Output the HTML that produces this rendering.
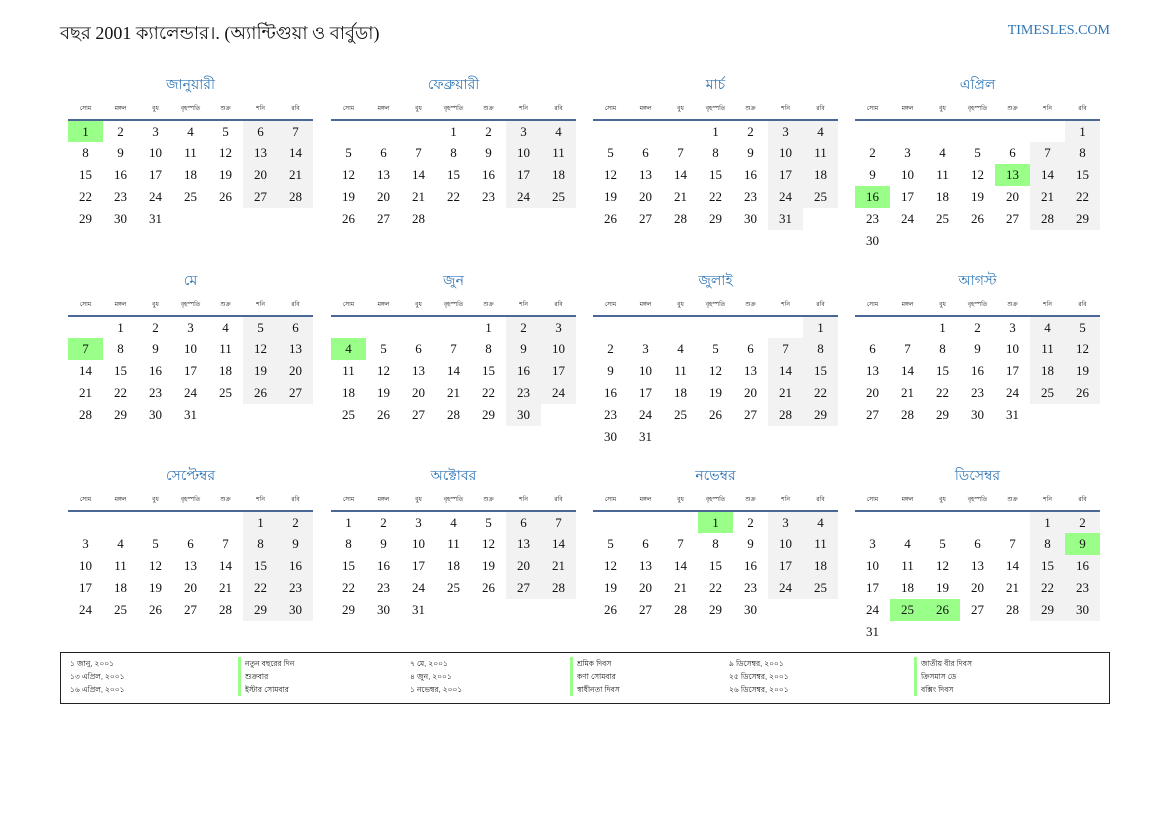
<!DOCTYPE html>
<html><head><meta charset="utf-8"><style>
*{margin:0;padding:0;box-sizing:border-box}
body{width:1169px;height:827px;background:#fff;position:relative;font-family:"Liberation Serif","Noto Serif CJK SC",serif;color:#111;overflow:hidden}
.hd{position:absolute;left:60px;top:19px;font-size:18px}
.site{position:absolute;right:59px;top:23px;font-size:14px;color:#2e75b6}
.m{position:absolute;width:245px}
.t{height:20px;line-height:20px;text-align:center;color:#2e75b6;font-size:14px;font-family:"Liberation Sans",sans-serif}
table{border-collapse:collapse;table-layout:fixed;width:245px}
th{font-size:6px;font-weight:normal;font-family:"Liberation Sans",sans-serif;border-bottom:2px solid #4a6797}
td{width:35px;height:22px;text-align:center;font-size:13px;padding:0}
td.w{background:#f2f2f2}
td.h{background:#99ff88}
.hr th{height:26px;padding-top:3px;vertical-align:middle}
.lg{position:absolute;left:60px;top:652px;width:1050px;height:52px;border:1.5px solid #222;font-size:7.5px;font-family:"Liberation Sans",sans-serif}
.lg div{position:absolute;line-height:13px;height:13px}
.lg .n{border-left:3px solid #99ff88;padding-left:4px}
</style></head><body>
<div class="hd">বছর 2001 ক্যালেন্ডার।. (অ্যান্টিগুয়া ও বার্বুডা)</div>
<div class="site">TIMESLES.COM</div>

<div class="m" style="left:68px;top:74px"><div class="t">জানুয়ারী</div><table><tr class="hr"><th>সোম</th><th>মঙ্গল</th><th>বুধ</th><th>বৃহস্পতি</th><th>শুক্র</th><th>শনি</th><th>রবি</th></tr>
<tr><td class="h">1</td><td>2</td><td>3</td><td>4</td><td>5</td><td class="w">6</td><td class="w">7</td></tr>
<tr><td>8</td><td>9</td><td>10</td><td>11</td><td>12</td><td class="w">13</td><td class="w">14</td></tr>
<tr><td>15</td><td>16</td><td>17</td><td>18</td><td>19</td><td class="w">20</td><td class="w">21</td></tr>
<tr><td>22</td><td>23</td><td>24</td><td>25</td><td>26</td><td class="w">27</td><td class="w">28</td></tr>
<tr><td>29</td><td>30</td><td>31</td><td></td><td></td><td></td><td></td></tr></table></div>

<div class="m" style="left:331px;top:74px"><div class="t">ফেব্রুয়ারী</div><table><tr class="hr"><th>সোম</th><th>মঙ্গল</th><th>বুধ</th><th>বৃহস্পতি</th><th>শুক্র</th><th>শনি</th><th>রবি</th></tr>
<tr><td></td><td></td><td></td><td>1</td><td>2</td><td class="w">3</td><td class="w">4</td></tr>
<tr><td>5</td><td>6</td><td>7</td><td>8</td><td>9</td><td class="w">10</td><td class="w">11</td></tr>
<tr><td>12</td><td>13</td><td>14</td><td>15</td><td>16</td><td class="w">17</td><td class="w">18</td></tr>
<tr><td>19</td><td>20</td><td>21</td><td>22</td><td>23</td><td class="w">24</td><td class="w">25</td></tr>
<tr><td>26</td><td>27</td><td>28</td><td></td><td></td><td></td><td></td></tr></table></div>

<div class="m" style="left:593px;top:74px"><div class="t">মার্চ</div><table><tr class="hr"><th>সোম</th><th>মঙ্গল</th><th>বুধ</th><th>বৃহস্পতি</th><th>শুক্র</th><th>শনি</th><th>রবি</th></tr>
<tr><td></td><td></td><td></td><td>1</td><td>2</td><td class="w">3</td><td class="w">4</td></tr>
<tr><td>5</td><td>6</td><td>7</td><td>8</td><td>9</td><td class="w">10</td><td class="w">11</td></tr>
<tr><td>12</td><td>13</td><td>14</td><td>15</td><td>16</td><td class="w">17</td><td class="w">18</td></tr>
<tr><td>19</td><td>20</td><td>21</td><td>22</td><td>23</td><td class="w">24</td><td class="w">25</td></tr>
<tr><td>26</td><td>27</td><td>28</td><td>29</td><td>30</td><td class="w">31</td><td></td></tr></table></div>

<div class="m" style="left:855px;top:74px"><div class="t">এপ্রিল</div><table><tr class="hr"><th>সোম</th><th>মঙ্গল</th><th>বুধ</th><th>বৃহস্পতি</th><th>শুক্র</th><th>শনি</th><th>রবি</th></tr>
<tr><td></td><td></td><td></td><td></td><td></td><td></td><td class="w">1</td></tr>
<tr><td>2</td><td>3</td><td>4</td><td>5</td><td>6</td><td class="w">7</td><td class="w">8</td></tr>
<tr><td>9</td><td>10</td><td>11</td><td>12</td><td class="h">13</td><td class="w">14</td><td class="w">15</td></tr>
<tr><td class="h">16</td><td>17</td><td>18</td><td>19</td><td>20</td><td class="w">21</td><td class="w">22</td></tr>
<tr><td>23</td><td>24</td><td>25</td><td>26</td><td>27</td><td class="w">28</td><td class="w">29</td></tr>
<tr><td>30</td><td></td><td></td><td></td><td></td><td></td><td></td></tr></table></div>

<div class="m" style="left:68px;top:270px"><div class="t">মে</div><table><tr class="hr"><th>সোম</th><th>মঙ্গল</th><th>বুধ</th><th>বৃহস্পতি</th><th>শুক্র</th><th>শনি</th><th>রবি</th></tr>
<tr><td></td><td>1</td><td>2</td><td>3</td><td>4</td><td class="w">5</td><td class="w">6</td></tr>
<tr><td class="h">7</td><td>8</td><td>9</td><td>10</td><td>11</td><td class="w">12</td><td class="w">13</td></tr>
<tr><td>14</td><td>15</td><td>16</td><td>17</td><td>18</td><td class="w">19</td><td class="w">20</td></tr>
<tr><td>21</td><td>22</td><td>23</td><td>24</td><td>25</td><td class="w">26</td><td class="w">27</td></tr>
<tr><td>28</td><td>29</td><td>30</td><td>31</td><td></td><td></td><td></td></tr></table></div>

<div class="m" style="left:331px;top:270px"><div class="t">জুন</div><table><tr class="hr"><th>সোম</th><th>মঙ্গল</th><th>বুধ</th><th>বৃহস্পতি</th><th>শুক্র</th><th>শনি</th><th>রবি</th></tr>
<tr><td></td><td></td><td></td><td></td><td>1</td><td class="w">2</td><td class="w">3</td></tr>
<tr><td class="h">4</td><td>5</td><td>6</td><td>7</td><td>8</td><td class="w">9</td><td class="w">10</td></tr>
<tr><td>11</td><td>12</td><td>13</td><td>14</td><td>15</td><td class="w">16</td><td class="w">17</td></tr>
<tr><td>18</td><td>19</td><td>20</td><td>21</td><td>22</td><td class="w">23</td><td class="w">24</td></tr>
<tr><td>25</td><td>26</td><td>27</td><td>28</td><td>29</td><td class="w">30</td><td></td></tr></table></div>

<div class="m" style="left:593px;top:270px"><div class="t">জুলাই</div><table><tr class="hr"><th>সোম</th><th>মঙ্গল</th><th>বুধ</th><th>বৃহস্পতি</th><th>শুক্র</th><th>শনি</th><th>রবি</th></tr>
<tr><td></td><td></td><td></td><td></td><td></td><td></td><td class="w">1</td></tr>
<tr><td>2</td><td>3</td><td>4</td><td>5</td><td>6</td><td class="w">7</td><td class="w">8</td></tr>
<tr><td>9</td><td>10</td><td>11</td><td>12</td><td>13</td><td class="w">14</td><td class="w">15</td></tr>
<tr><td>16</td><td>17</td><td>18</td><td>19</td><td>20</td><td class="w">21</td><td class="w">22</td></tr>
<tr><td>23</td><td>24</td><td>25</td><td>26</td><td>27</td><td class="w">28</td><td class="w">29</td></tr>
<tr><td>30</td><td>31</td><td></td><td></td><td></td><td></td><td></td></tr></table></div>

<div class="m" style="left:855px;top:270px"><div class="t">আগস্ট</div><table><tr class="hr"><th>সোম</th><th>মঙ্গল</th><th>বুধ</th><th>বৃহস্পতি</th><th>শুক্র</th><th>শনি</th><th>রবি</th></tr>
<tr><td></td><td></td><td>1</td><td>2</td><td>3</td><td class="w">4</td><td class="w">5</td></tr>
<tr><td>6</td><td>7</td><td>8</td><td>9</td><td>10</td><td class="w">11</td><td class="w">12</td></tr>
<tr><td>13</td><td>14</td><td>15</td><td>16</td><td>17</td><td class="w">18</td><td class="w">19</td></tr>
<tr><td>20</td><td>21</td><td>22</td><td>23</td><td>24</td><td class="w">25</td><td class="w">26</td></tr>
<tr><td>27</td><td>28</td><td>29</td><td>30</td><td>31</td><td></td><td></td></tr></table></div>

<div class="m" style="left:68px;top:465px"><div class="t">সেপ্টেম্বর</div><table><tr class="hr"><th>সোম</th><th>মঙ্গল</th><th>বুধ</th><th>বৃহস্পতি</th><th>শুক্র</th><th>শনি</th><th>রবি</th></tr>
<tr><td></td><td></td><td></td><td></td><td></td><td class="w">1</td><td class="w">2</td></tr>
<tr><td>3</td><td>4</td><td>5</td><td>6</td><td>7</td><td class="w">8</td><td class="w">9</td></tr>
<tr><td>10</td><td>11</td><td>12</td><td>13</td><td>14</td><td class="w">15</td><td class="w">16</td></tr>
<tr><td>17</td><td>18</td><td>19</td><td>20</td><td>21</td><td class="w">22</td><td class="w">23</td></tr>
<tr><td>24</td><td>25</td><td>26</td><td>27</td><td>28</td><td class="w">29</td><td class="w">30</td></tr></table></div>

<div class="m" style="left:331px;top:465px"><div class="t">অক্টোবর</div><table><tr class="hr"><th>সোম</th><th>মঙ্গল</th><th>বুধ</th><th>বৃহস্পতি</th><th>শুক্র</th><th>শনি</th><th>রবি</th></tr>
<tr><td>1</td><td>2</td><td>3</td><td>4</td><td>5</td><td class="w">6</td><td class="w">7</td></tr>
<tr><td>8</td><td>9</td><td>10</td><td>11</td><td>12</td><td class="w">13</td><td class="w">14</td></tr>
<tr><td>15</td><td>16</td><td>17</td><td>18</td><td>19</td><td class="w">20</td><td class="w">21</td></tr>
<tr><td>22</td><td>23</td><td>24</td><td>25</td><td>26</td><td class="w">27</td><td class="w">28</td></tr>
<tr><td>29</td><td>30</td><td>31</td><td></td><td></td><td></td><td></td></tr></table></div>

<div class="m" style="left:593px;top:465px"><div class="t">নভেম্বর</div><table><tr class="hr"><th>সোম</th><th>মঙ্গল</th><th>বুধ</th><th>বৃহস্পতি</th><th>শুক্র</th><th>শনি</th><th>রবি</th></tr>
<tr><td></td><td></td><td></td><td class="h">1</td><td>2</td><td class="w">3</td><td class="w">4</td></tr>
<tr><td>5</td><td>6</td><td>7</td><td>8</td><td>9</td><td class="w">10</td><td class="w">11</td></tr>
<tr><td>12</td><td>13</td><td>14</td><td>15</td><td>16</td><td class="w">17</td><td class="w">18</td></tr>
<tr><td>19</td><td>20</td><td>21</td><td>22</td><td>23</td><td class="w">24</td><td class="w">25</td></tr>
<tr><td>26</td><td>27</td><td>28</td><td>29</td><td>30</td><td></td><td></td></tr></table></div>

<div class="m" style="left:855px;top:465px"><div class="t">ডিসেম্বর</div><table><tr class="hr"><th>সোম</th><th>মঙ্গল</th><th>বুধ</th><th>বৃহস্পতি</th><th>শুক্র</th><th>শনি</th><th>রবি</th></tr>
<tr><td></td><td></td><td></td><td></td><td></td><td class="w">1</td><td class="w">2</td></tr>
<tr><td>3</td><td>4</td><td>5</td><td>6</td><td>7</td><td class="w">8</td><td class="h">9</td></tr>
<tr><td>10</td><td>11</td><td>12</td><td>13</td><td>14</td><td class="w">15</td><td class="w">16</td></tr>
<tr><td>17</td><td>18</td><td>19</td><td>20</td><td>21</td><td class="w">22</td><td class="w">23</td></tr>
<tr><td>24</td><td class="h">25</td><td class="h">26</td><td>27</td><td>28</td><td class="w">29</td><td class="w">30</td></tr>
<tr><td>31</td><td></td><td></td><td></td><td></td><td></td><td></td></tr></table></div>

<div class="lg">
<div style="left:9px;top:4px">১ জানু, ২০০১</div><div class="n" style="left:177px;top:4px">নতুন বছরের দিন</div>
<div style="left:9px;top:17px">১৩ এপ্রিল, ২০০১</div><div class="n" style="left:177px;top:17px">শুক্রবার</div>
<div style="left:9px;top:30px">১৬ এপ্রিল, ২০০১</div><div class="n" style="left:177px;top:30px">ইস্টার সোমবার</div>
<div style="left:349px;top:4px">৭ মে, ২০০১</div><div class="n" style="left:509px;top:4px">শ্রমিক দিবস</div>
<div style="left:349px;top:17px">৪ জুন, ২০০১</div><div class="n" style="left:509px;top:17px">কণা সোমবার</div>
<div style="left:349px;top:30px">১ নভেম্বর, ২০০১</div><div class="n" style="left:509px;top:30px">স্বাধীনতা দিবস</div>
<div style="left:668px;top:4px">৯ ডিসেম্বর, ২০০১</div><div class="n" style="left:853px;top:4px">জাতীয় বীর দিবস</div>
<div style="left:668px;top:17px">২৫ ডিসেম্বর, ২০০১</div><div class="n" style="left:853px;top:17px">ক্রিসমাস ডে</div>
<div style="left:668px;top:30px">২৬ ডিসেম্বর, ২০০১</div><div class="n" style="left:853px;top:30px">বক্সিং দিবস</div>
</div>
</body></html>
